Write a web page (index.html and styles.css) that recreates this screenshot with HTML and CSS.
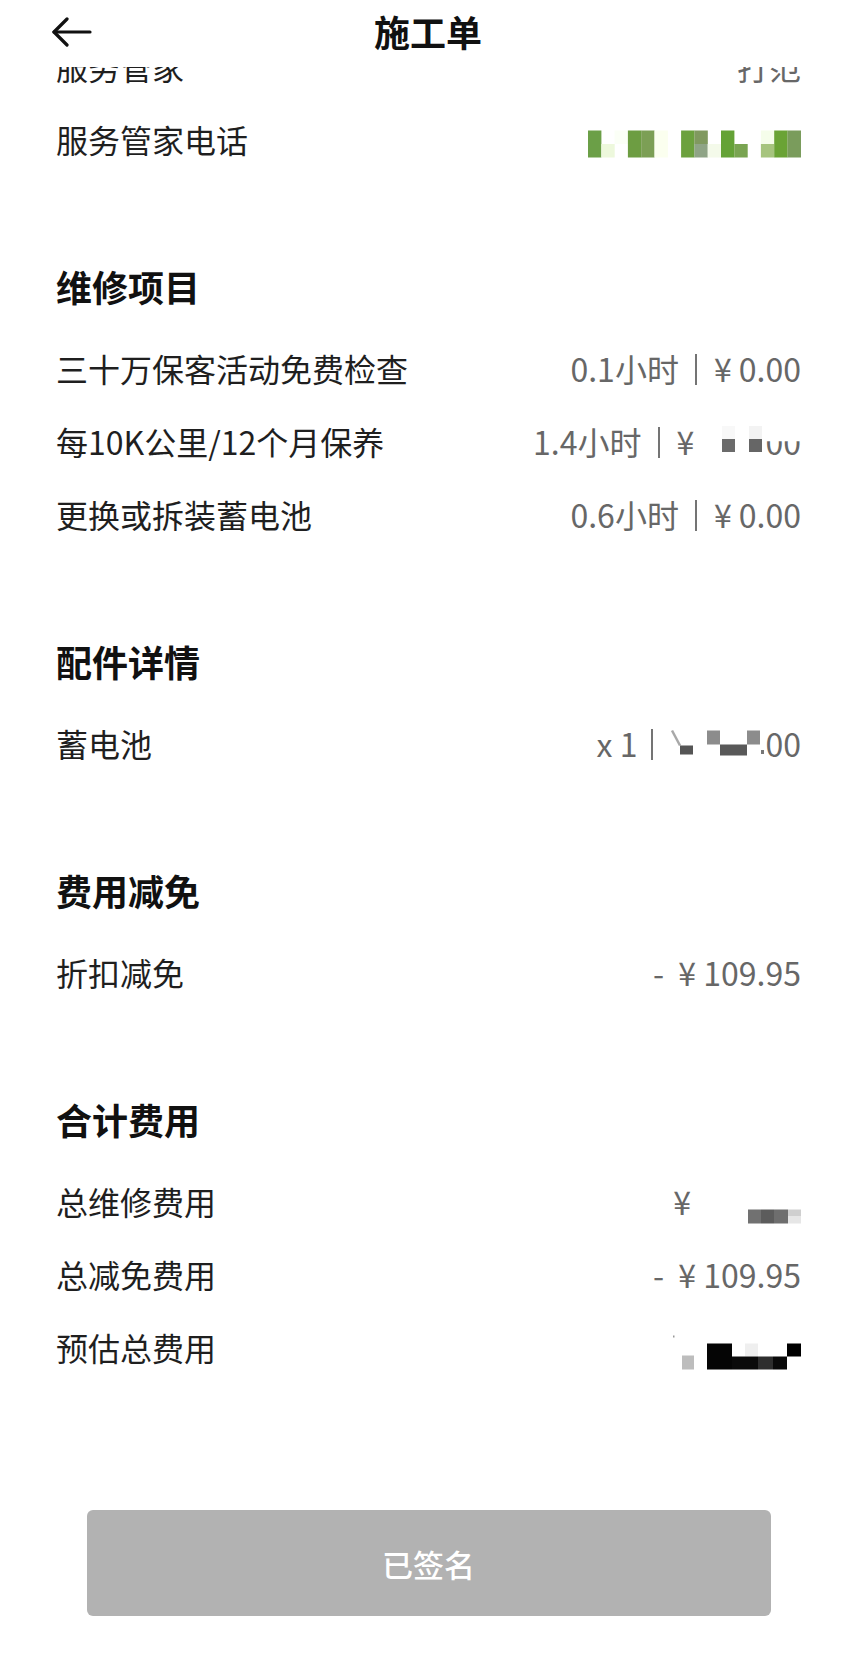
FILE: index.html
```html
<!DOCTYPE html>
<html lang="zh-CN">
<head>
<meta charset="utf-8">
<title>施工单</title>
<link rel="stylesheet" href="styles.css">
</head>
<body>
<header class="topbar">
  <button class="back" aria-label="返回">
    <svg width="40" height="30" viewBox="0 0 40 30" fill="none" stroke="#111" stroke-width="3.2" stroke-linecap="round" stroke-linejoin="round"><path d="M2 15 H38"/><path d="M15 2 L2 15 L15 28"/></svg>
  </button>
  <h1 class="title">施工单</h1>
</header>

<main class="page">
  <section class="section">
    <div class="row"><span class="label">服务管家</span><span class="value"><span class="t">打范</span></span></div>
    <div class="row"><span class="label">服务管家电话</span><span class="value"><svg class="mosaic" width="213" height="40" viewBox="0 0 213 40">
            <rect x="0" y="11.5" width="13.4" height="13.5" fill="#6b9f47"/><rect x="0" y="25" width="13.4" height="13.5" fill="#6b9f47"/>
            <rect x="13.3" y="25" width="13.4" height="13.5" fill="#edf8dc"/>
            <rect x="26.6" y="11.5" width="13.4" height="13.5" fill="#fbfff6"/>
            <rect x="39.9" y="11.5" width="13.4" height="13.5" fill="#6d9d42"/><rect x="39.9" y="25" width="13.4" height="13.5" fill="#6d9d42"/>
            <rect x="53.2" y="11.5" width="13.4" height="13.5" fill="#7c9f55"/><rect x="53.2" y="25" width="13.4" height="13.5" fill="#7c9f55"/>
            <rect x="66.5" y="11.5" width="13.4" height="13.5" fill="#fbffef"/><rect x="66.5" y="25" width="13.4" height="13.5" fill="#fbffef"/>
            <rect x="93.1" y="11.5" width="13.4" height="13.5" fill="#6ca13e"/><rect x="93.1" y="25" width="13.4" height="13.5" fill="#6ca13e"/>
            <rect x="106.4" y="11.5" width="13.4" height="13.5" fill="#80995f"/><rect x="106.4" y="25" width="13.4" height="13.5" fill="#8fa486"/>
            <rect x="119.7" y="25" width="13.4" height="13.5" fill="#f4faea"/>
            <rect x="133" y="11.5" width="13.4" height="13.5" fill="#64a236"/><rect x="133" y="25" width="13.4" height="13.5" fill="#64a236"/>
            <rect x="146.3" y="25" width="13.4" height="13.5" fill="#79a451"/>
            <rect x="172.9" y="11.5" width="13.4" height="13.5" fill="#f5fdea"/><rect x="172.9" y="25" width="13.4" height="13.5" fill="#a6c47e"/>
            <rect x="186.2" y="11.5" width="13.4" height="13.5" fill="#6aa335"/><rect x="186.2" y="25" width="13.4" height="13.5" fill="#6aa335"/>
            <rect x="199.5" y="11.5" width="13.5" height="13.5" fill="#7a9c5c"/><rect x="199.5" y="25" width="13.5" height="13.5" fill="#7a9c5c"/>
        </svg></span></div>
  </section>

  <section class="section">
    <h2 class="heading">维修项目</h2>
    <div class="row"><span class="label">三十万保客活动免费检查</span><span class="value"><span class="t">0.1小时</span><i class="sep"></i><span class="t">¥ 0.00</span></span></div>
    <div class="row"><span class="label">每10K公里/12个月保养</span><span class="value"><span class="t">1.4小时</span><i class="sep"></i><span class="t">¥ </span><svg class="mosaic" width="64" height="48" viewBox="0 0 64 48">
          <rect x="21" y="9" width="13" height="13" fill="#f8f8f8"/>
          <rect x="48" y="9" width="13" height="13" fill="#f3f3f3"/>
          <rect x="21" y="22" width="13" height="13" fill="#6b6b6b"/>
          <rect x="48" y="22" width="13" height="13" fill="#666666"/>
        </svg><span class="t half">00</span></span></div>
    <div class="row"><span class="label">更换或拆装蓄电池</span><span class="value"><span class="t">0.6小时</span><i class="sep"></i><span class="t">¥ 0.00</span></span></div>
  </section>

  <section class="section">
    <h2 class="heading">配件详情</h2>
    <div class="row"><span class="label">蓄电池</span><span class="value"><span class="t">x 1</span><i class="sep sep-tight"></i><svg class="mosaic" width="98" height="48" viewBox="0 0 98 48">
          <path d="M5 11.5 L13 26.5" stroke="#a8a8a8" stroke-width="2.5"/>
          <rect x="13" y="26.5" width="13" height="9" fill="#555555"/>
          <rect x="40" y="11.5" width="13" height="14" fill="#8c8c8c"/>
          <rect x="53" y="25.5" width="27" height="11" fill="#595959"/>
          <rect x="80" y="11.5" width="13" height="14" fill="#8c8c8c"/>
          <rect x="94" y="31" width="3" height="4" fill="#777777"/>
        </svg><span class="t">00</span></span></div>
  </section>

  <section class="section">
    <h2 class="heading">费用减免</h2>
    <div class="row"><span class="label">折扣减免</span><span class="value"><span class="t">-  ¥ 109.95</span></span></div>
  </section>

  <section class="section">
    <h2 class="heading">合计费用</h2>
    <div class="row"><span class="label">总维修费用</span><span class="value"><span class="t">¥</span><svg class="mosaic" width="110" height="48" viewBox="0 0 110 48">
          <rect x="57" y="32.5" width="13" height="14" fill="#717171"/>
          <rect x="70" y="32.5" width="13" height="14" fill="#5c5c5c"/>
          <rect x="83" y="32.5" width="14" height="14" fill="#6e6e6e"/>
          <rect x="97" y="32.5" width="13" height="7" fill="#cfcfcf"/>
          <rect x="97" y="39.5" width="13" height="7" fill="#e6e6e6"/>
        </svg></span></div>
    <div class="row"><span class="label">总减免费用</span><span class="value"><span class="t">-  ¥ 109.95</span></span></div>
    <div class="row"><span class="label">预估总费用</span><span class="value"><svg class="mosaic" width="130" height="48" viewBox="0 0 130 48">
          <rect x="2" y="12.5" width="1.5" height="2" fill="#999999"/>
          <rect x="11" y="32.5" width="12" height="14" fill="#bdbdbd"/>
          <rect x="36" y="20.5" width="25" height="26" fill="#050505"/>
          <rect x="74" y="20.5" width="13" height="13" fill="#efefef"/>
          <rect x="61" y="33.5" width="26" height="13" fill="#0a0a0a"/>
          <rect x="87" y="33.5" width="15" height="13" fill="#2e2e2e"/>
          <rect x="102" y="33.5" width="14" height="13" fill="#0a0a0a"/>
          <rect x="116" y="20.5" width="14" height="13" fill="#000000"/>
        </svg></span></div>
  </section>

  <div class="actions">
    <button class="signed" type="button">已签名</button>
  </div>
</main>
</body>
</html>
```

FILE: styles.css
```css
* {
  box-sizing: border-box;
}

html, body {
  margin: 0;
  padding: 0;
  background: #ffffff;
}

body {
  font-family: "Noto Sans CJK SC", "Noto Sans", sans-serif;
  color: #1f1f1f;
}

.topbar {
  position: fixed;
  top: 0;
  left: 0;
  right: 0;
  height: 67px;
  background: #ffffff;
  z-index: 10;
  display: flex;
  justify-content: center;
  align-items: flex-start;
}

.back {
  position: absolute;
  left: 52px;
  top: 17px;
  width: 40px;
  height: 30px;
  padding: 0;
  border: 0;
  background: none;
  display: flex;
}

.title {
  margin: 0;
  font-size: 36px;
  font-weight: 700;
  color: #111111;
  line-height: 62px;
}

.page {
  padding: 29px 55px 0 56px;
}

.section + .section {
  margin-top: 66px;
}

.heading {
  margin: 0;
  height: 90px;
  line-height: 90px;
  font-size: 36px;
  font-weight: 700;
  color: #111111;
}

.row {
  height: 73px;
  display: flex;
  align-items: center;
  justify-content: space-between;
  font-size: 32px;
}

.label {
  color: #1f1f1f;
  white-space: nowrap;
}

.value {
  display: flex;
  align-items: center;
  color: #676767;
  line-height: 40px;
}

.t {
  white-space: pre;
}

.sep {
  display: block;
  flex: none;
  width: 2px;
  height: 31px;
  background: #747474;
  margin: 4px 17px 0 16px;
}

.sep-tight {
  margin: 4px 14px 0 14px;
}

.mosaic {
  display: block;
  flex: none;
}

.half {
  clip-path: inset(52% 0 0 0);
}

.actions {
  margin-top: 127px;
  display: flex;
  justify-content: center;
}

.signed {
  width: 684px;
  height: 106px;
  border: 0;
  border-radius: 6px;
  background: #b2b2b2;
  color: #ffffff;
  font-family: "Noto Sans CJK SC", sans-serif;
  font-size: 31px;
  font-weight: 500;
}
```
